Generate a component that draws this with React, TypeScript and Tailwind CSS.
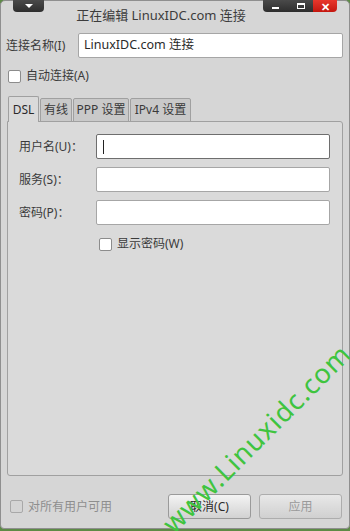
import React from 'react';

const font = { fontFamily: '"Noto Sans", "Noto Sans CJK SC", sans-serif' };

const Checkbox: React.FC<{ label: string; disabled?: boolean }> = ({ label, disabled }) => (
  <label className={`flex items-center gap-[5px] text-[12px] ${disabled ? 'text-[#8e8e8e]' : 'text-[#3a3a3a]'}`}>
    <span className={`w-[13px] h-[13px] rounded-[2px] border ${disabled ? 'border-[#a8a8a8] bg-[#d4d4d4]' : 'border-[#8c8c8c] bg-white'}`} />
    {label}
  </label>
);

const Field: React.FC<{ label: string; focused?: boolean }> = ({ label, focused }) => (
  <div className="flex items-center">
    <span className="w-[77px] text-[12px] text-[#3a3a3a]">{label}</span>
    <div className={`w-[234px] h-[25px] bg-white rounded-[2px] border flex items-center pl-[6px] ${focused ? 'border-[#6e6e6e]' : 'border-[#a6a6a6]'}`}>
      {focused && <span className="w-px h-[14px] bg-[#222]" />}
    </div>
  </div>
);

const Tab: React.FC<{ label: string; active?: boolean; w: string }> = ({ label, active, w }) => (
  <div
    className={`${w} flex items-center justify-center text-[12px] border border-[#a0a0a0] rounded-t-[2px] ${
      active ? 'h-[26px] bg-[#dadada] border-b-0 text-[#2a2a2a] relative z-10' : 'h-[24px] bg-[#c9c9c9] text-[#3a3a3a]'
    }`}
  >
    {label}
  </div>
);

export default function App() {
  return (
    <div className="w-[350px] h-[531px] bg-[#5d8a46] relative overflow-hidden" style={font}>
      <div className="h-[529px] bg-[#d6d6d6] rounded-t-[5px] rounded-b-[4px] border border-[#8f8f8f] flex flex-col relative">
        {/* title bar */}
        <div className="h-[27px] relative flex items-center justify-center">
          <span className="text-[13px] text-[#3c3c3c] mr-[28px] mt-[2px]">正在编辑 LinuxIDC.com 连接</span>
          <div className="absolute left-[12px] top-[-1px] w-[31px] h-[12px] rounded-b-[4px] bg-gradient-to-b from-[#4a4a4a] to-[#2e2e2e] flex items-center justify-center">
            <span className="w-0 h-0 border-l-[4px] border-r-[4px] border-t-[4px] border-l-transparent border-r-transparent border-t-white" />
          </div>
          <div className="absolute left-[262px] top-[-1px] h-[12px] flex rounded-b-[4px] overflow-hidden">
            <div className="w-[25px] bg-gradient-to-b from-[#4a4a4a] to-[#2e2e2e] flex items-end justify-center pb-[3px]">
              <span className="w-[7px] h-[2px] bg-white" />
            </div>
            <div className="w-[25px] bg-gradient-to-b from-[#4a4a4a] to-[#2e2e2e] flex items-center justify-center">
              <span className="w-[8px] h-[6px] border border-white border-t-2" />
            </div>
            <div className="w-[24px] bg-gradient-to-b from-[#e8372c] to-[#c4160e] flex items-center justify-center text-white text-[11px] font-bold leading-none">
              ✕
            </div>
          </div>
        </div>

        {/* connection name */}
        <div className="flex items-center pl-[5px] pr-[6px] mt-[5px]">
          <span className="w-[72px] text-[12px] text-[#3a3a3a]">连接名称(I)</span>
          <div className="flex-1 h-[25px] bg-white rounded-[2px] border border-[#a6a6a6] flex items-center pl-[5px] text-[12.5px] text-[#2a2a2a]">
            LinuxIDC.com 连接
          </div>
        </div>

        <div className="pl-[7px] mt-[9px]">
          <Checkbox label="自动连接(A)" />
        </div>

        {/* tabs */}
        <div className="px-[6px] mt-[11px] flex flex-col">
          <div className="flex items-end pl-px gap-px">
            <Tab label="DSL" active w="w-[31px]" />
            <Tab label="有线" w="w-[32px]" />
            <Tab label="PPP 设置" w="w-[56px]" />
            <Tab label="IPv4 设置" w="w-[61px]" />
          </div>
          <div className="h-[355px] -mt-px bg-[#dadada] border border-[#a0a0a0] rounded-b-[3px] rounded-tr-[3px] pl-[11px] pt-[12px] flex flex-col gap-[8px]">
            <Field label="用户名(U)：" focused />
            <Field label="服务(S)：" />
            <Field label="密码(P)：" />
            <div className="pl-[80px] mt-[2px]">
              <Checkbox label="显示密码(W)" />
            </div>
          </div>
        </div>

        {/* bottom */}
        <div className="flex items-center pl-[9px] pr-[7px] mt-[18px]">
          <div className="flex-1">
            <Checkbox label="对所有用户可用" disabled />
          </div>
          <button className="w-[83px] h-[25px] rounded-[3px] border border-[#9a9a9a] bg-gradient-to-b from-[#f4f4f4] to-[#d2d2d2] text-[12px] text-[#2a2a2a]">
            取消(C)
          </button>
          <button className="w-[83px] h-[25px] ml-[8px] rounded-[3px] border border-[#adadad] bg-gradient-to-b from-[#e8e8e8] to-[#d0d0d0] text-[12px] text-[#9a9a9a]">
            应用
          </button>
        </div>
      </div>

      {/* watermark */}
      <div className="absolute left-[256px] top-[438px] -translate-x-1/2 -translate-y-1/2 -rotate-45 whitespace-nowrap text-[27px] text-[#3fc43f] leading-none tracking-[1px]">
        www.Linuxidc.com
      </div>
    </div>
  );
}
